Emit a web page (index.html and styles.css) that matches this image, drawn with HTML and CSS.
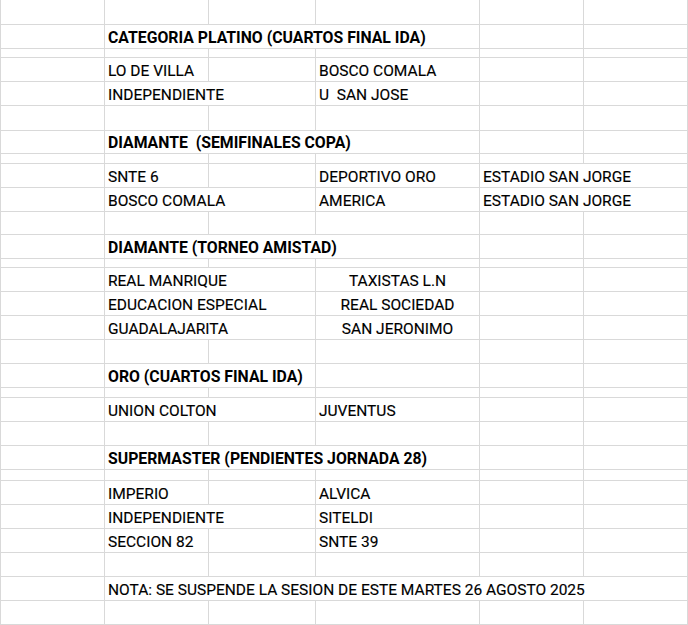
FILE: index.html
```html
<!DOCTYPE html>
<html lang="es">
<head>
<meta charset="utf-8">
<title>Partidos</title>
<link rel="stylesheet" href="styles.css">
</head>
<body>
<div class="sheet">
  <div class="row row-top"><div class="c"></div><div class="c"></div><div class="c"></div><div class="c"></div><div class="c"></div><div class="c"></div></div>
  <div class="row"><div class="c"></div><div class="c h span3">CATEGORIA PLATINO (CUARTOS FINAL IDA)</div><div class="c"></div><div class="c"></div></div>
  <div class="row gap"><div class="c"></div><div class="c"></div><div class="c"></div><div class="c"></div><div class="c"></div><div class="c"></div></div>
  <div class="row"><div class="c"></div><div class="c">LO DE VILLA</div><div class="c"></div><div class="c">BOSCO COMALA</div><div class="c"></div><div class="c"></div></div>
  <div class="row"><div class="c"></div><div class="c span2">INDEPENDIENTE</div><div class="c">U  SAN JOSE</div><div class="c"></div><div class="c"></div></div>
  <div class="row row-tall"><div class="c"></div><div class="c"></div><div class="c"></div><div class="c"></div><div class="c"></div><div class="c"></div></div>
  <div class="row row-short"><div class="c"></div><div class="c h span3">DIAMANTE  (SEMIFINALES COPA)</div><div class="c"></div><div class="c"></div></div>
  <div class="row gap gap-10"><div class="c"></div><div class="c"></div><div class="c"></div><div class="c"></div><div class="c"></div><div class="c"></div></div>
  <div class="row"><div class="c"></div><div class="c">SNTE 6</div><div class="c"></div><div class="c">DEPORTIVO ORO</div><div class="c span2">ESTADIO SAN JORGE</div></div>
  <div class="row"><div class="c"></div><div class="c span2">BOSCO COMALA</div><div class="c">AMERICA</div><div class="c span2">ESTADIO SAN JORGE</div></div>
  <div class="row row-short"><div class="c"></div><div class="c"></div><div class="c"></div><div class="c"></div><div class="c"></div><div class="c"></div></div>
  <div class="row"><div class="c"></div><div class="c h span3">DIAMANTE (TORNEO AMISTAD)</div><div class="c"></div><div class="c"></div></div>
  <div class="row gap"><div class="c"></div><div class="c"></div><div class="c"></div><div class="c"></div><div class="c"></div><div class="c"></div></div>
  <div class="row"><div class="c"></div><div class="c span2">REAL MANRIQUE</div><div class="c center">TAXISTAS L.N</div><div class="c"></div><div class="c"></div></div>
  <div class="row"><div class="c"></div><div class="c span2">EDUCACION ESPECIAL</div><div class="c center">REAL SOCIEDAD</div><div class="c"></div><div class="c"></div></div>
  <div class="row"><div class="c"></div><div class="c span2">GUADALAJARITA</div><div class="c center">SAN JERONIMO</div><div class="c"></div><div class="c"></div></div>
  <div class="row"><div class="c"></div><div class="c"></div><div class="c"></div><div class="c"></div><div class="c"></div><div class="c"></div></div>
  <div class="row"><div class="c"></div><div class="c h span2">ORO (CUARTOS FINAL IDA)</div><div class="c"></div><div class="c"></div><div class="c"></div></div>
  <div class="row gap gap-10"><div class="c"></div><div class="c"></div><div class="c"></div><div class="c"></div><div class="c"></div><div class="c"></div></div>
  <div class="row"><div class="c"></div><div class="c span2">UNION COLTON</div><div class="c">JUVENTUS</div><div class="c"></div><div class="c"></div></div>
  <div class="row"><div class="c"></div><div class="c"></div><div class="c"></div><div class="c"></div><div class="c"></div><div class="c"></div></div>
  <div class="row"><div class="c"></div><div class="c h span3">SUPERMASTER (PENDIENTES JORNADA 28)</div><div class="c"></div><div class="c"></div></div>
  <div class="row gap gap-11"><div class="c"></div><div class="c"></div><div class="c"></div><div class="c"></div><div class="c"></div><div class="c"></div></div>
  <div class="row"><div class="c"></div><div class="c">IMPERIO</div><div class="c"></div><div class="c">ALVICA</div><div class="c"></div><div class="c"></div></div>
  <div class="row"><div class="c"></div><div class="c span2">INDEPENDIENTE</div><div class="c">SITELDI</div><div class="c"></div><div class="c"></div></div>
  <div class="row"><div class="c"></div><div class="c">SECCION 82</div><div class="c"></div><div class="c">SNTE 39</div><div class="c"></div><div class="c"></div></div>
  <div class="row"><div class="c"></div><div class="c"></div><div class="c"></div><div class="c"></div><div class="c"></div><div class="c"></div></div>
  <div class="row"><div class="c"></div><div class="c span5">NOTA: SE SUSPENDE LA SESION DE ESTE MARTES 26 AGOSTO 2025</div></div>
  <div class="row"><div class="c"></div><div class="c"></div><div class="c"></div><div class="c"></div><div class="c"></div><div class="c"></div></div>
</div>
</body>
</html>
```

FILE: styles.css
```css
* { box-sizing: border-box; }

html, body {
  margin: 0;
  padding: 0;
  background: #ffffff;
}

body {
  font-family: Roboto, "Liberation Sans", sans-serif;
  font-size: 15.5px;
  line-height: 18px;
  color: #000000;
}

.sheet {
  width: 688px;
  border-left: 1px solid #d9d9d9;
}

.row {
  display: grid;
  grid-template-columns: 104px 104px 107px 164px 104px 104px;
  height: 24px;
  border-bottom: 1px solid #d9d9d9;
}

.row-top { height: 25px; }
.row-tall { height: 25px; }
.row-short { height: 23px; }

.gap { height: 9px; }
.gap-10 { height: 10px; }
.gap-11 { height: 11px; }

.c {
  border-right: 1px solid #d9d9d9;
  padding: 0 3px 1px 3px;
  display: flex;
  align-items: flex-end;
  white-space: pre;
  overflow: hidden;
  min-width: 0;
  -webkit-text-stroke: 0.15px #000000;
}

.h {
  font-weight: 700;
  font-size: 15.8px;
  -webkit-text-stroke: 0;
}

.center { justify-content: center; }

.span2 { grid-column: span 2; }
.span3 { grid-column: span 3; }
.span5 { grid-column: span 5; }
```
